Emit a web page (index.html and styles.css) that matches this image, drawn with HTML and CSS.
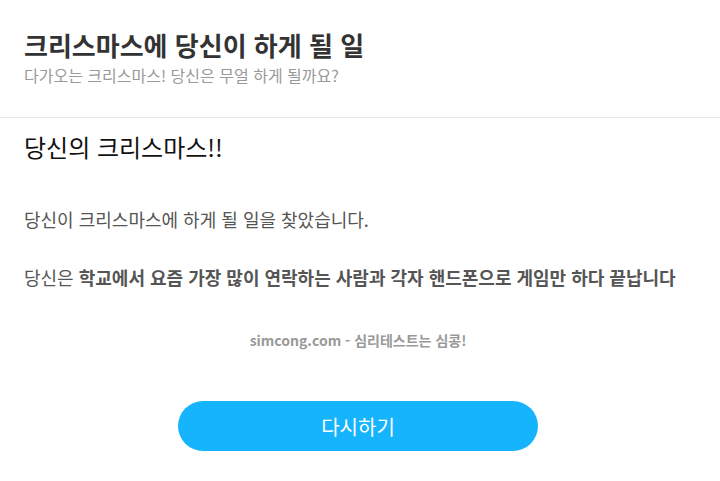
FILE: index.html
```html
<!DOCTYPE html>
<html lang="ko">
<head>
  <meta charset="UTF-8">
  <title>크리스마스에 당신이 하게 될 일</title>
  <link rel="stylesheet" href="styles.css">
</head>
<body>

  <div class="header">
    <h1>크리스마스에 당신이 하게 될 일</h1>
    <p class="subtitle">다가오는 크리스마스! 당신은 무얼 하게 될까요?</p>
  </div>

  <div class="result">
    <h2>당신의 크리스마스!!</h2>
    <p class="text">당신이 크리스마스에 하게 될 일을 찾았습니다.</p>
    <p class="text">당신은 <b>학교에서 요즘 가장 많이 연락하는 사람과 각자 핸드폰으로 게임만 하다 끝납니다</b></p>
    <p class="site">simcong.com - 심리테스트는 심콩!</p>
    <div class="button-container">
      <button type="button">다시하기</button>
    </div>
  </div>

</body>
</html>
```

FILE: styles.css
```css
body {
  font-family: "Noto Sans CJK KR", "Noto Sans", sans-serif;
  background-color: white;
  margin: 0;
}

.header {
  padding: 28px 24px 31px;
  border-bottom: 1px solid #e8e8e8;
}

h1 {
  font-size: 26px;
  font-weight: bold;
  color: #333;
  margin: 0;
  line-height: 34px;
}

.subtitle {
  font-size: 16px;
  color: #999;
  margin: 2px 0 0;
  line-height: 22px;
}

.result {
  padding: 14px 24px;
}

h2 {
  font-size: 24px;
  font-weight: normal;
  color: #111;
  margin: 0 0 44px;
  line-height: 30px;
}

.text {
  font-size: 18px;
  color: #555;
  margin: 0 0 32px;
  line-height: 26px;
}

.site {
  text-align: center;
  font-size: 14px;
  font-weight: bold;
  color: #999;
  margin: 40px 4px 51px 0;
  line-height: 20px;
}

.button-container {
  display: flex;
  justify-content: center;
  padding-right: 4px;
}

button {
  width: 360px;
  height: 50px;
  border: none;
  border-radius: 25px;
  background-color: #16b4fd;
  color: white;
  font-family: inherit;
  font-size: 20px;
  cursor: pointer;
}
```
